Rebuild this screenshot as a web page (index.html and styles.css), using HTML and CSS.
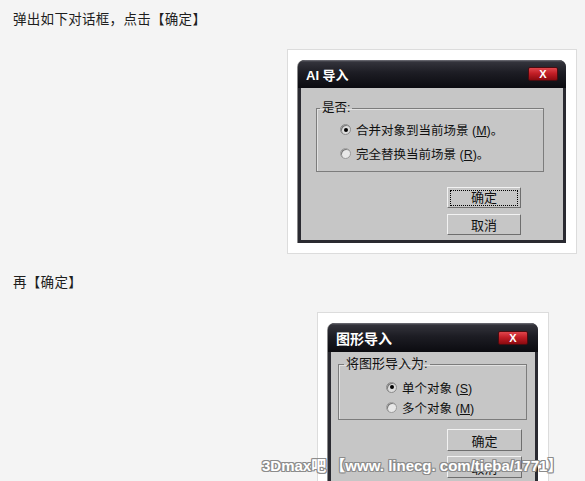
FILE: index.html
```html
<!DOCTYPE html>
<html lang="zh-CN">
<head>
  <meta charset="UTF-8" />
  <meta name="viewport" content="width=device-width, initial-scale=1.0"/>
  <title>3Dmax吧</title>
  <link rel="stylesheet" href="styles.css">
</head>
<body>
  <div class="post">
    <p class="line">弹出如下对话框，点击【确定】</p>

    <div class="shot shot-ai">
      <div class="dlg dlg-ai">
        <div class="titlebar">
          <span class="title">AI 导入</span>
          <span class="close">X</span>
        </div>
        <div class="dlg-body">
          <fieldset class="group">
            <legend>是否:</legend>
            <div class="opts">
              <div class="opt"><span class="radio checked"></span><span>合并对象到当前场景 (<u>M</u>)。</span></div>
              <div class="opt"><span class="radio"></span><span>完全替换当前场景 (<u>R</u>)。</span></div>
            </div>
          </fieldset>
          <div class="buttons">
            <div class="btn focus"><span>确定</span></div>
            <div class="btn"><span>取消</span></div>
          </div>
        </div>
      </div>
    </div>

    <p class="line">再【确定】</p>

    <div class="shot shot-shape">
      <div class="dlg dlg-shape">
        <div class="titlebar">
          <span class="title">图形导入</span>
          <span class="close">X</span>
        </div>
        <div class="dlg-body">
          <fieldset class="group">
            <legend>将图形导入为:</legend>
            <div class="opts">
              <div class="opt"><span class="radio checked"></span><span>单个对象 (<u>S</u>)</span></div>
              <div class="opt"><span class="radio"></span><span>多个对象 (<u>M</u>)</span></div>
            </div>
          </fieldset>
          <div class="buttons">
            <div class="btn"><span>确定</span></div>
            <div class="btn"><span>取消</span></div>
          </div>
        </div>
      </div>
    </div>
  </div>

  <div class="watermark">3Dmax吧 【www. linecg. com/tieba/1771】</div>
</body>
</html>
```

FILE: styles.css
```css
html, body {
  overflow: hidden;
}

body {
  margin: 0;
  background-color: #f4f4f4;
  font-family: "Liberation Sans", "Noto Sans CJK SC", sans-serif;
  color: #1e1e1e;
}

.post {
  padding: 10px 0 0 13px;
}

.line {
  margin: 0;
  font-size: 13.5px;
  line-height: 20px;
  letter-spacing: 0.3px;
}

.shot {
  width: fit-content;
  margin: 19px 0;
  padding: 10px;
  background-color: #fff;
  border: 1px solid #dcdcdc;
}

.shot-ai {
  margin-left: 274px;
}

.shot-shape {
  margin-left: 304px;
}

/* window */
.dlg {
  background-color: #2a2a31;
  border-radius: 7px 7px 0 0;
  padding: 0 3px 3px;
  box-shadow: -1px 0 0 #8a8a8a;
}

.dlg-ai {
  width: 262px;
}

.dlg-shape {
  width: 204px;
}

.titlebar {
  height: 28px;
  margin: 0 -3px;
  padding: 0 8px;
  display: flex;
  align-items: center;
  justify-content: space-between;
  border-radius: 7px 7px 0 0;
  background: linear-gradient(#74747c 0, #33333b 2px, #1d1d24 45%, #0b0b10 100%);
}

.dlg-shape .titlebar {
  height: 29px;
  padding-right: 10px;
}

.title {
  color: #fff;
  font-weight: bold;
  font-size: 13px;
}

.dlg-shape .title {
  font-size: 14px;
}

.close {
  width: 28px;
  height: 12px;
  border: 1px solid #4a0c10;
  border-radius: 2px;
  background: linear-gradient(#e0464c 0, #c21e26 45%, #8c0a10 100%);
  color: #fff;
  font-weight: bold;
  font-size: 11px;
  line-height: 12px;
  text-align: center;
}

.dlg-body {
  background-color: #c6c6c6;
  padding: 13px 19px 5px 15px;
  color: #111;
}

.dlg-shape .dlg-body {
  padding: 5px 8px 4px 7px;
}

/* group box */
.group {
  margin: 0;
  border: 1px solid #7c7c7c;
  box-shadow: inset 1px 1px 0 #e2e2e2;
  padding: 6px 0 9px 0;
}

.dlg-shape .group {
  padding: 8px 0 4px 0;
}

.group legend {
  padding: 0 2px;
  margin-left: 3px;
  font-size: 12.5px;
  line-height: 14px;
}

.dlg-shape .group legend {
  margin-left: 5px;
  font-size: 13px;
}

.opts {
  display: flex;
  flex-direction: column;
  gap: 7px;
  padding-left: 23px;
}

.dlg-shape .opts {
  gap: 4px;
  padding-left: 47px;
}

.opt {
  display: flex;
  align-items: center;
  gap: 5px;
  height: 17px;
  font-size: 12.5px;
}

.dlg-shape .opt {
  height: 16px;
}

.radio {
  width: 9px;
  height: 9px;
  border-radius: 50%;
  background-color: #e8e8e8;
  border: 1px solid #9a9a9a;
  box-shadow: inset 1px 1px 0 #7a7a7a;
  position: relative;
}

.radio.checked {
  background-color: #dcdcdc;
  border-color: #8a8a8a;
}

.radio.checked::after {
  content: "";
  position: absolute;
  left: 2.5px;
  top: 2.5px;
  width: 4px;
  height: 4px;
  border-radius: 50%;
  background-color: #000;
}

/* buttons */
.buttons {
  display: flex;
  flex-direction: column;
  align-items: flex-end;
  gap: 6px;
  margin-top: 15px;
  padding-right: 23px;
}

.dlg-shape .buttons {
  margin-top: 9px;
  padding-right: 5px;
  gap: 5px;
}

.btn {
  width: 72px;
  height: 19px;
  border: 1px solid;
  border-color: #f2f2f2 #6e6e6e #6e6e6e #f2f2f2;
  display: flex;
  align-items: center;
  justify-content: center;
  font-size: 13px;
}

.dlg-shape .btn {
  width: 73px;
  height: 20px;
}

.btn.focus span {
  display: block;
  width: 66px;
  height: 14px;
  border: 1px dotted #000;
  line-height: 14px;
  text-align: center;
}

/* site watermark lying over the picture */
.watermark {
  position: absolute;
  left: 262px;
  top: 457px;
  font-weight: bold;
  font-size: 15px;
  line-height: 17px;
  color: #fff;
  white-space: nowrap;
  text-shadow: 1px 0 0 #8c8c8c, -1px 0 0 #8c8c8c, 0 1px 0 #8c8c8c, 0 -1px 0 #8c8c8c,
    1px 1px 0 #8c8c8c, -1px -1px 0 #8c8c8c, 1px -1px 0 #8c8c8c, -1px 1px 0 #8c8c8c;
}
```
